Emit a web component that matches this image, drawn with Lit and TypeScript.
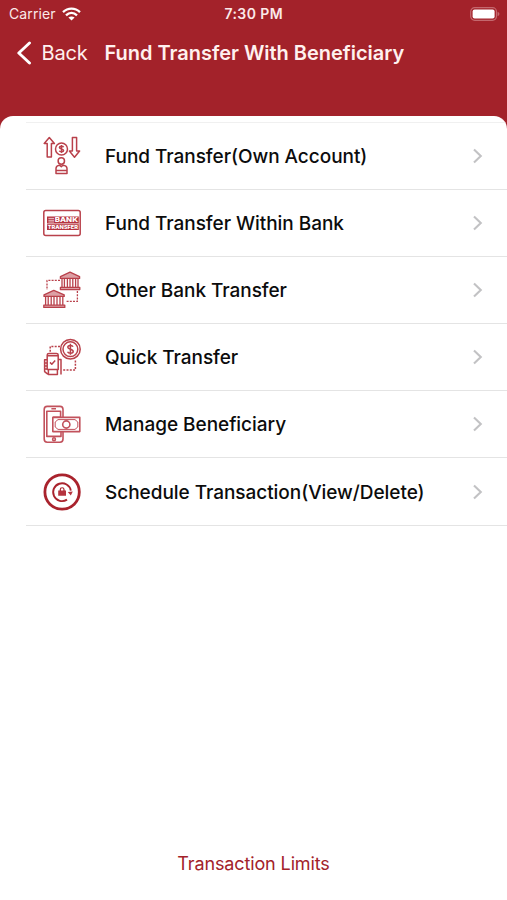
import { LitElement, html, svg, css } from "lit";
import { customElement } from "lit/decorators.js";

const icons = {
  own: svg`
    <g stroke-width="1.5">
      <path d="M13.3 7.6 18.4 13.6H15.4V27H11.2V13.6H8.2Z M36.4 7.6H40.6V21H43.6L38.5 27.2 33.4 21H36.4Z"/>
      <circle cx="25.5" cy="19" r="6"/>
      <path d="M27.6 17.2C27 15.8 23.4 15.8 23.4 17.6 23.4 19.4 27.6 18.6 27.6 20.5 27.6 22.2 23.9 22.2 23.3 20.8 M25.5 15V23"/>
      <circle cx="25.3" cy="31" r="3.2"/>
      <path d="M20 43.6V38.6C20 36.4 22 35.4 23.6 35.2L25.3 36.6 27 35.2C28.8 35.4 31 36.4 31 38.6V43.6Z M20 40.6H31"/>
    </g>`,
  bank: svg`
    <rect x="7.8" y="13.6" width="36.4" height="24.8" rx="2" stroke-width="1.5"/>
    <path class="solid" d="M11 19.4H42.8V33.1H11Z"/>
    <path class="light" d="M12.4 21.4H18M12.4 23.3H18M12.4 25H18M11 26.8H42.8"/>
    <text x="18.8" y="25.4" textLength="23.2" lengthAdjust="spacingAndGlyphs" font-size="6.4">BANK</text>
    <text x="11.8" y="32.3" textLength="30.2" lengthAdjust="spacingAndGlyphs" font-size="5.3">TRANSFER</text>`,
  other: svg`
    <g stroke-width="1.3">
      <path stroke-dasharray="2 1.2" d="M24 16.4H11V26 M41.4 27V37.4H30"/>
      <path class="tint" d="M24.4 12.6 34 8.2 43.6 12.6V14.4H24.4Z M24.4 23.4H43.8V25.6H24.4Z"/>
      <path d="M26 14.6V23.2M28.4 14.6V23.2M31.4 14.6V23.2M34 14.6V23.2M36.8 14.6V23.2M39.6 14.6V23.2M42 14.6V23.2"/>
      <path class="tint" d="M8 30.8 17.8 26.4 28.2 30.8V32.4H8Z M7.8 41.2H28.8V43.4H7.8Z"/>
      <path d="M9.6 32.6V41M12.2 32.6V41M15.2 32.6V41M18 32.6V41M21 32.6V41M24 32.6V41M26.8 32.6V41"/>
    </g>`,
  quick: svg`
    <g stroke-width="1.5">
      <circle cx="34.4" cy="18.2" r="9.8"/><circle cx="34.4" cy="18.2" r="7.4"/>
      <path stroke-width="1.5" d="M37 15.8C36.2 13.8 31.8 14 31.8 16.3 31.8 18.8 37.2 17.6 37.2 20.4 37.2 22.7 32.4 22.8 31.6 20.7 M34.4 12.8V23.8"/>
      <path stroke-dasharray="2 1.3" d="M24 15.4H14.2V22 M39.4 29.4V39H27"/>
      <path d="M11.2 24.8V24C11.2 22.8 12 22.4 13 22.4H20.4C21.6 22.4 22.2 23 22.2 24V24.8 M11.2 24.8H22.2V38.4H11.2Z M12.4 38.4V43.4H21.4V38.4 M22.2 28.4H25V43.6 M11.2 28.8H8.6V40.6L11.8 43.2 M8.6 32H11M8.6 35H11M8.6 38H11"/>
      <path d="M14 31.4 15.8 33.2 19.2 29.6"/>
    </g>`,
  manage: svg`
    <g stroke-width="1.6" stroke="#c2525c">
      <path d="M27 19V11.4C27 9.4 25.8 8.4 24 8.4H11.2C9.2 8.4 8.2 9.6 8.2 11.4V41C8.2 43 9.4 44.2 11.2 44.2H24C26 44.2 27 43 27 41V34"/>
      <path d="M17 19.2H25M25 33.6V38.4H10.8V13.2H24.6V19 M15.4 10.8H20"/>
      <circle cx="18" cy="41.2" r="1.4"/>
      <rect x="16.8" y="19.4" width="27" height="14.2"/>
      <path d="M22 21.6H39L41.8 24V29L39 31.4H22L19.2 29V24Z" stroke-width="1"/>
      <circle cx="30.3" cy="26.5" r="3.6"/>
    </g>`,
  schedule: svg`
    <g stroke="#a9232d">
      <circle cx="26.1" cy="26" r="17.2" stroke-width="2.8"/>
      <path stroke-width="1.9" d="M31 33.6A8.9 8.9 0 1 1 34.8 24.6"/>
      <path class="solid" d="M31.8 26 36.8 25.6 34.8 29.6Z M22.2 24.4H30V29.8H22.2Z"/>
      <path stroke-width="1.2" d="M24.3 25V23.4C24.3 21.2 28 21.2 28 23.4V25"/>
    </g>`,
};

const rows = [
  { icon: icons.own, label: "Fund Transfer(Own Account)" },
  { icon: icons.bank, label: "Fund Transfer Within Bank" },
  { icon: icons.other, label: "Other Bank Transfer" },
  { icon: icons.quick, label: "Quick Transfer" },
  { icon: icons.manage, label: "Manage Beneficiary" },
  { icon: icons.schedule, label: "Schedule Transaction(View/Delete)" },
];

@customElement("app-root")
export class AppRoot extends LitElement {
  static styles = css`
    :host {
      display: flex;
      flex-direction: column;
      height: 900px;
      overflow: hidden;
      background: #a3222a;
      font-family: Inter, "Liberation Sans", sans-serif;
      color: #0c0c0c;
    }
    svg { display: block; flex: none; }
    .status {
      display: grid;
      grid-template-columns: 1fr auto 1fr;
      align-items: center;
      height: 27px;
      padding: 0 7px 0 9px;
      box-sizing: border-box;
      color: #fbe9e9;
      font-size: 14px;
    }
    .carrier { display: flex; align-items: center; gap: 6px; letter-spacing: 0.1px; }
    .time { font-weight: 600; font-size: 14px; letter-spacing: 0.4px; margin-right: 1.5px; }
    .battery { justify-self: end; }
    .nav {
      display: flex;
      align-items: center;
      height: 51px;
      padding-left: 16px;
      color: #fff1ef;
    }
    .back { display: flex; align-items: center; gap: 9.5px; width: 88.5px; font-size: 20px; letter-spacing: -0.2px; }
    .title { font-size: 20px; font-weight: 600; letter-spacing: -0.02px; }
    .back, .title, .label { white-space: nowrap; }
    .card {
      flex: 1;
      display: flex;
      flex-direction: column;
      margin-top: 37.5px;
      padding-top: 6px;
      border-radius: 13px 13px 0 0;
      background: #fff;
      overflow: hidden;
    }
    .list { margin-left: 26px; border-top: 1px solid #f0f0f0; }
    .row {
      display: flex;
      align-items: center;
      box-sizing: border-box;
      height: 67.2px;
      padding: 0 24.5px 0 10px;
      border-bottom: 1px solid #e4e4e4;
    }
    .icon { fill: none; stroke: #b9414b; stroke-linejoin: round; }
    .icon .solid { fill: #b5343f; stroke: none; }
    .icon .tint { fill: #dda0a5; }
    .icon .light { stroke: #fff; stroke-width: 0.7; }
    .icon text { fill: #fff; stroke: none; font-weight: 800; }
    .label { flex: 1; margin-left: 17px; padding-top: 1.2px; font-size: 19px; font-weight: 500; letter-spacing: -0.04px; }
    .limits {
      margin: auto 0 24px;
      text-align: center;
      font-size: 18px;
      line-height: 24px;
      letter-spacing: -0.12px;
      color: #a3222a;
    }
  `;

  render() {
    return html`
      <div class="status">
        <div class="carrier">
          <span>Carrier</span>
          <svg width="19" height="14" viewBox="0 0 19 14" fill="none" stroke="#fff" stroke-width="2.3">
            <path d="M1 5.1C5.8.4 13.2.4 18 5.1M4 8.4C7.3 5.2 11.7 5.2 15 8.4" />
            <path d="M9.5 13.6 6.4 10.5C8.2 9 10.8 9 12.6 10.5Z" fill="#fff" stroke="none" />
          </svg>
        </div>
        <span class="time">7:30 PM</span>
        <svg class="battery" width="30" height="14" viewBox="0 0 30 14">
          <rect x=".7" y=".7" width="25.8" height="12.6" rx="4" fill="none" stroke="#c4686e" stroke-width="1.2" />
          <rect x="2.6" y="2.6" width="22" height="8.8" rx="2" fill="#fff" />
          <path d="M27.6 4.8C30 5.8 30 8.2 27.6 9.2Z" fill="#c4686e" />
        </svg>
      </div>
      <div class="nav">
        <div class="back">
          <svg width="16" height="24" viewBox="0 0 16 24" fill="none" stroke="#fff" stroke-width="2.9" stroke-linecap="round" stroke-linejoin="round">
            <path d="M13.5 2 2.8 12 13.5 22" />
          </svg>
          <span>Back</span>
        </div>
        <div class="title">Fund Transfer With Beneficiary</div>
      </div>
      <div class="card">
        <div class="list">
          ${rows.map((r) => html`
            <div class="row">
              <svg class="icon" width="52" height="52" viewBox="0 0 52 52">${r.icon}</svg>
              <span class="label">${r.label}</span>
              <svg width="11" height="16" viewBox="0 0 11 16" fill="none" stroke="#c2c2c4" stroke-width="2.1">
                <path d="M2 1.4 8.8 8 2 14.6" />
              </svg>
            </div>`)}
        </div>
        <div class="limits">Transaction Limits</div>
      </div>
    `;
  }
}
